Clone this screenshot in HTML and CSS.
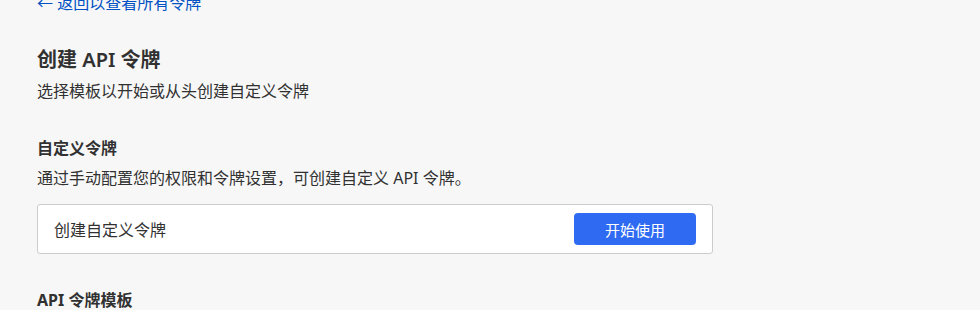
FILE: index.html
```html
<!DOCTYPE html>
<html lang="zh-CN">
<head>
    <meta charset="UTF-8">
    <title>创建 API 令牌</title>
    <link rel="stylesheet" href="styles.css">
</head>
<body>
<div class="page">
    <a class="back" href="#">&larr; 返回以查看所有令牌</a>
    <div class="head">
        <h1 class="title">创建 API 令牌</h1>
        <p class="sub">选择模板以开始或从头创建自定义令牌</p>
    </div>
    <div class="section">
        <h2 class="section-title">自定义令牌</h2>
        <p class="section-desc">通过手动配置您的权限和令牌设置，可创建自定义 API 令牌。</p>
        <div class="card">
            <span class="card-name">创建自定义令牌</span>
            <button class="btn">开始使用</button>
        </div>
    </div>
    <div class="section section-templates">
        <h2 class="section-title">API 令牌模板</h2>
    </div>
</div>
</body>
</html>
```

FILE: styles.css
```css
html, body {
    margin: 0;
    background-color: #f7f7f7;
}
body {
    font-family: "Noto Sans", "Noto Sans CJK SC", sans-serif;
    color: #313131;
    height: 310px;
    overflow: hidden;
}
.page {
    padding-left: 37px;
    width: 676px;
}
.back {
    display: block;
    margin-top: -8px;
    line-height: 22px;
    font-size: 16px;
    color: #0051c3;
    text-decoration: none;
}
.head {
    padding-top: 34px;
}
.title {
    margin: 0;
    font-size: 20px;
    font-weight: 600;
    line-height: 24px;
}
.sub {
    margin: 7px 0 0;
    font-size: 16px;
    line-height: 24px;
}
.section {
    padding-top: 33px;
}
.section-templates {
    padding-top: 34px;
}
.section-title {
    margin: 0;
    font-size: 16px;
    font-weight: 700;
    line-height: 24px;
}
.section-desc {
    margin: 6px 0 0;
    font-size: 16px;
    line-height: 24px;
}
.card {
    margin-top: 14px;
    display: flex;
    align-items: center;
    justify-content: space-between;
    height: 48px;
    padding: 0 16px 0 16px;
    background-color: #fff;
    border: 1px solid #cccccc;
    border-radius: 3px;
}
.card-name {
    font-size: 16px;
}
.btn {
    width: 122px;
    height: 32px;
    border: none;
    border-radius: 4px;
    background-color: #2f6bf2;
    color: #fff;
    font-family: inherit;
    font-size: 15px;
    cursor: pointer;
}
```
